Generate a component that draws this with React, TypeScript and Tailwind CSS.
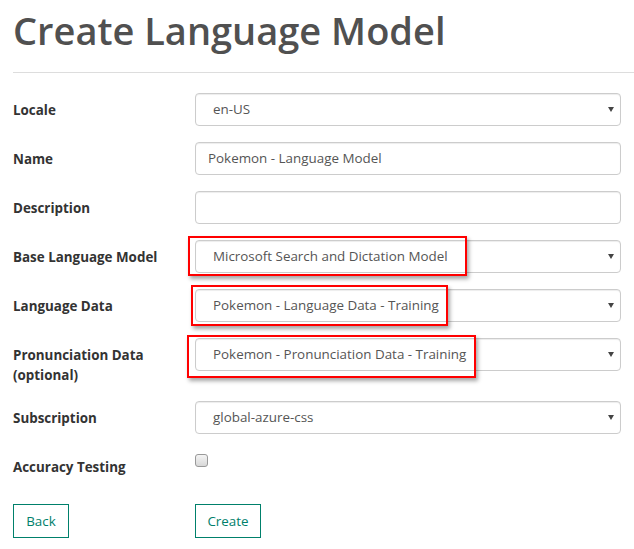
import React from "react";

const font = { fontFamily: '"Segoe UI", "Open Sans", "Noto Sans", sans-serif' };

interface RowProps {
  label: React.ReactNode;
  children: React.ReactNode;
}

const Row: React.FC<RowProps> = ({ label, children }) => (
  <div className="flex">
    <div className="w-[182px] shrink-0 pt-[7px] text-[13.4px] font-bold leading-[20px] text-[#333]">
      {label}
    </div>
    <div className="relative w-[426px]">{children}</div>
  </div>
);

const Field: React.FC<{ value?: string; select?: boolean }> = ({
  value = "",
  select = false,
}) => (
  <div
    className={`flex h-[33px] items-center rounded-[4px] border border-[#ccc] bg-white text-[13.4px] text-[#555] shadow-[inset_0_1px_1px_rgba(0,0,0,0.075)] ${
      select ? "pl-[17px] pr-[6px]" : "pl-[12px]"
    }`}
  >
    <span className="flex-1">{value}</span>
    {select && (
      <svg width="6" height="5" viewBox="0 0 6 5">
        <path d="M0 0h6L3 5z" fill="#444" />
      </svg>
    )}
  </div>
);

const Callout: React.FC<{ className: string }> = ({ className }) => (
  <div
    className={`pointer-events-none absolute border-2 border-[#f00] shadow-[2px_3px_4px_rgba(0,0,0,0.35)] ${className}`}
  />
);

export default function App() {
  return (
    <div className="min-h-[549px] bg-white px-[13px]" style={font}>
      <h1 className="pt-[4px] text-[38px] font-semibold leading-[52px] text-[#505050]">
        Create Language Model
      </h1>
      <hr className="mt-[16px] mr-[-13px] border-t border-[#ddd]" />

      <div className="mt-[20px] flex flex-col gap-[16px]">
        <Row label="Locale">
          <Field value="en-US" select />
        </Row>
        <Row label="Name">
          <Field value="Pokemon - Language Model" />
        </Row>
        <Row label="Description">
          <Field />
        </Row>
        <Row label="Base Language Model">
          <Field value="Microsoft Search and Dictation Model" select />
          <Callout className="left-[-7px] top-[-4px] h-[40px] w-[279px]" />
        </Row>
        <Row label="Language Data">
          <Field value="Pokemon - Language Data - Training" select />
          <Callout className="left-[-4px] top-[-4px] h-[41px] w-[257px]" />
        </Row>
        <Row label={<>Pronunciation Data<br />(optional)</>}>
          <Field value="Pokemon - Pronunciation Data - Training" select />
          <Callout className="left-[-8px] top-[-3px] h-[43px] w-[289px]" />
        </Row>
        <Row label="Subscription">
          <Field value="global-azure-css" select />
        </Row>
        <Row label="Accuracy Testing">
          <div className="h-[34px] pt-[4px]">
            <div className="h-[13px] w-[13px] rounded-[3px] border border-[#999] bg-gradient-to-b from-[#f4f4f4] to-[#d8d8d8]" />
          </div>
        </Row>
      </div>

      <div className="mt-[20px] flex">
        <div className="w-[182px]">
          <button className="h-[34px] w-[56px] border border-[#00806b] bg-white text-[13.4px] text-[#00806b]">
            Back
          </button>
        </div>
        <button className="h-[34px] w-[66px] border border-[#00806b] bg-white text-[13.4px] text-[#00806b]">
          Create
        </button>
      </div>
    </div>
  );
}
